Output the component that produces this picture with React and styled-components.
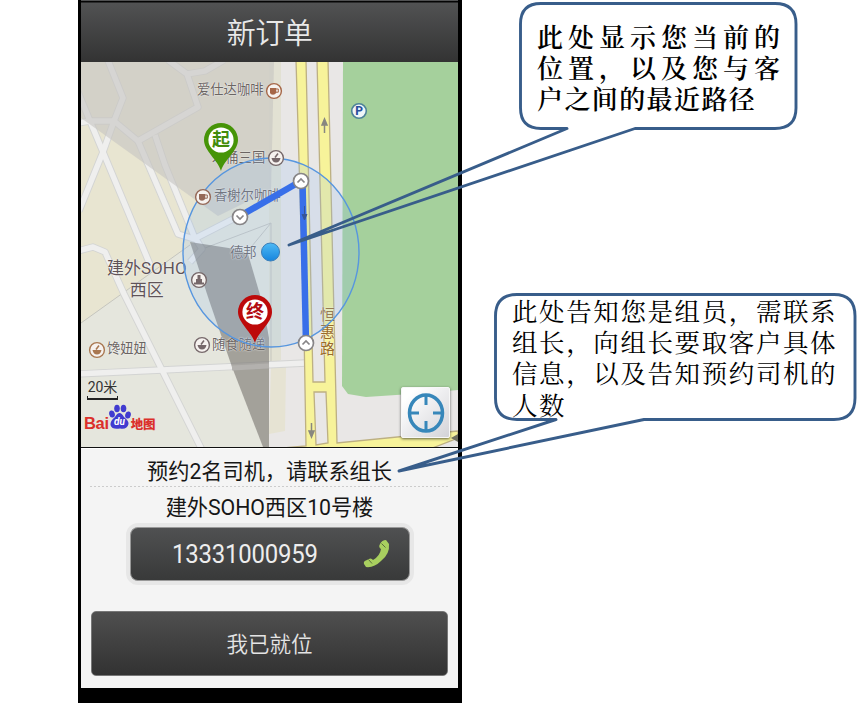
import React from "react";
import styled, { createGlobalStyle } from "styled-components";

const GlobalStyle = createGlobalStyle`
  * { box-sizing: border-box; }
  body {
    margin: 0;
    background: #fff;
    font-family: Roboto, "Noto Sans CJK SC", sans-serif;
    overflow: hidden;
  }
`;

const Page = styled.main`
  display: flex;
  width: 858px;
  height: 712px;
  padding-left: 78px;
`;

const Phone = styled.section`
  display: flex;
  flex-direction: column;
  flex: none;
  width: 384px;
  height: 703px;
  padding: 0 4px 15px 3px;
  background: #000;
`;

const TitleBar = styled.header`
  display: flex;
  align-items: center;
  justify-content: center;
  height: 62px;
  padding-bottom: 1px;
  border-top: 1px solid #505152;
  background: linear-gradient(#050505 0 1px, #515253 2px, #333 100%);
  color: #e9e9e9;
  font-size: 29px;
  font-weight: 350;
  letter-spacing: -0.5px;
`;

const MapArea = styled.div`
  position: relative;
  height: 385px;
  overflow: hidden;
`;

const MapArt = styled.svg`
  display: block;
  width: 377px;
  height: 385px;
`;

const PlaceLabel = styled.span`
  position: absolute;
  left: ${(p) => p.$x - 81}px;
  top: ${(p) => p.$y - 62}px;
  color: ${(p) => p.$color || "#6b6563"};
  font-size: ${(p) => p.$size || 13.3}px;
  font-weight: ${(p) => p.$weight || 400};
  line-height: ${(p) => p.$leading || 16}px;
  text-align: center;
  white-space: pre;
  text-shadow: 0 0 1px #fff, 0 0 2px #ffffffa0;
`;

const DuLabel = styled(PlaceLabel)`
  font-style: italic;
  text-shadow: none;
`;

const MapLayer = styled(MapArt)`
  position: absolute;
  inset: 0;
`;

const ScaleBar = styled.div`
  position: absolute;
  left: 6px;
  top: 316px;
  width: 31px;
  height: 22px;
  background:
    linear-gradient(#222, #222) bottom / 100% 2px no-repeat,
    linear-gradient(#222, #222) left bottom / 1px 4px no-repeat,
    linear-gradient(#222, #222) right bottom / 1px 4px no-repeat;
  color: #333;
  font-size: 14px;
  line-height: 19px;
  text-align: center;
  white-space: nowrap;
`;

const Brand = styled.div`
  position: absolute;
  left: 3px;
  top: 350px;
  display: flex;
  align-items: center;
  height: 22px;
  color: #db302b;
  font-family: "Liberation Sans", "Noto Sans CJK SC", sans-serif;
  font-size: 16.5px;
  font-weight: 700;
  letter-spacing: -0.3px;
`;

const BrandCjk = styled.span`
  margin-left: 22px;
  font-size: 12.5px;
  font-weight: 900;
  letter-spacing: -0.4px;
`;

const LocateButton = styled.button`
  position: absolute;
  left: 320px;
  top: 325px;
  display: grid;
  place-items: center;
  width: 49px;
  height: 51px;
  padding: 0;
  border: 1px solid #f7f7f7;
  border-radius: 2px;
  background: linear-gradient(135deg, #fff 15%, #d3d3d8);
  box-shadow: 0 1px 3px #0009;
`;

const Details = styled.div`
  display: flex;
  flex-direction: column;
  align-items: center;
  flex: 1;
  border-top: 1px solid #111;
  background: #f4f4f4;
  box-shadow: inset 0 1px #fff;
`;

const Notice = styled.p`
  width: 360px;
  height: 39px;
  margin: 0;
  background: repeating-linear-gradient(90deg, #ccc 0 2px, transparent 2px 4px) bottom / 100% 1px no-repeat;
  color: #161616;
  font-size: 21.2px;
  line-height: 47px;
  text-align: center;
  white-space: nowrap;
`;

const Address = styled.p`
  height: 36px;
  margin: 0;
  color: #161616;
  font-size: 21.3px;
  line-height: 42px;
  letter-spacing: -0.1px;
  white-space: nowrap;
`;

const CallButton = styled.button`
  display: flex;
  align-items: center;
  justify-content: space-between;
  width: 288px;
  height: 62px;
  padding: 0 20px 1px 42px;
  border: 4px solid #e7e7e7;
  border-radius: 12px;
  background: linear-gradient(#505152, #383939) padding-box;
  background-color: #e7e7e7;
  box-shadow: inset 0 0 0 1px #999;
  color: #ededed;
  font-family: Roboto, sans-serif;
`;

const PhoneNumber = styled.span`
  width: 146px;
  font-size: 26px;
  line-height: 30px;
  letter-spacing: -0.2px;
  white-space: nowrap;
  transform: scaleX(0.92);
  transform-origin: left;
`;

const ReadyButton = styled.button`
  width: 357px;
  height: 65px;
  margin-top: 26px;
  padding: 0 0 2px;
  border: 1px solid #777;
  border-radius: 5px;
  background: linear-gradient(#4f4f4f, #323232);
  color: #e4e4e4;
  font-family: "Noto Sans CJK SC", sans-serif;
  font-size: 21.5px;
  font-weight: 350;
`;

const Notes = styled.aside`
  display: flex;
  flex-direction: column;
  flex: none;
  width: 396px;
  padding-top: 2px;
`;

const Callout = styled.div`
  position: relative;
  width: ${(p) => p.$width}px;
  height: ${(p) => p.$height}px;
  margin: ${(p) => p.$margin};
  padding: ${(p) => p.$padding};
  color: #000;
  font-family: "Noto Serif CJK SC", "Noto Sans CJK SC", serif;
  font-size: ${(p) => p.$size}px;
  font-weight: ${(p) => p.$weight};
  line-height: 31.2px;
`;

const CalloutLine = styled.div`
  letter-spacing: ${(p) => p.$spacing}px;
  white-space: nowrap;
`;

const CalloutOutline = styled.svg`
  position: absolute;
  left: 0;
  top: 0;
  width: 1px;
  height: 1px;
  overflow: visible;
  pointer-events: none;
  fill: none;
  stroke: #385d8a;
  stroke-width: 2.9;
  stroke-linejoin: round;
`;

const roads = [
  "M107 58L123 98L114 121L103 152L79 211",
  "M78 92L90 121L103 152L151 267",
  "M78 123L90 121L114 121L138 141L198 107L187 74L168 60",
  "M187 74L205 71L224 60",
  "M138 141L178 234L194 239L239 216",
  "M155 135L165 165L194 236L202 249L190 262",
  "M78 251L93 247L105 252L124 294L162 370L202 450",
  "M78 374L162 370L306 363",
];

function Terrain() {
  return (
    <MapArt viewBox="81 62 377 385">
      <rect x="81" y="62" width="377" height="385" fill="#e8e5d1" />
      <path d="M81 323L190 245L239 216L281 195V447H81Z" fill="#e5e6dd" />
      <path d="M269 62H286V447H269Z" fill="#e2e1d3" />
      <path d="M281 62H458V447H269V366L281 360Z" fill="#e9e7e6" />
      <path d="M271 367H286L285 431L269 434Z" fill="#e6e3d3" />
      <path d="M81 323L190 245M205 248L271 223V363M271 223L247 252" fill="none" stroke="#c5c5be" />
      <g fill="none" strokeLinejoin="round" stroke="#d3d4d3" strokeWidth="7.3">
        {roads.map((d) => <path key={d} d={d} />)}
      </g>
      <g fill="none" strokeLinejoin="round" stroke="#efefee" strokeWidth="5.5">
        {roads.map((d) => <path key={d} d={d} />)}
      </g>
      <path d="M81 62H274L271 190L218 216L81 118Z" fill="#c6c5c1" opacity=".62" />
      <path d="M343 62H458V390L411 394L366 397L348 394L342 386Z" fill="#a5d09c" />
      <g fill="#f7f39a" stroke="#bdb083" strokeWidth="1.3">
        <path d="M270 449L306 446L304 330L296 60H306L313 382H325L317 60H328L337 443L458 431V438L430 449Z" />
        <path d="M314 392H326L328 443L316 445Z" fill="#e9e7e6" />
      </g>
      <path d="M190 242L235 249L248 254L263 305L269 338V447H263L232 367L210 303Z" fill="#77736e" opacity=".6" />
      <path d="M232 368L269 366" stroke="#b3b1ae" strokeWidth="5" />
    </MapArt>
  );
}

function Poi({ x, y, kind, color = "#76686a" }) {
  return (
    <g transform={`translate(${x} ${y})`}>
      <circle r="7.4" fill="#f6f2ef" stroke={color} strokeWidth="1.4" />
      {kind === "cup" && (
        <>
          <path d="M-4-3H2.200V2Q1 3.700-1 3.700Q-3.500 3.700-4 2Z" fill={color} />
          <path d="M2-2H4.300V1.200H2" fill="none" stroke={color} />
        </>
      )}
      {kind === "bowl" && (
        <>
          <path d="M-4.500 0H4.500Q3.500 4.500 0 4.500T-4.500 0" fill={color} />
          <path d="M-1-.5L2-4.500" stroke={color} strokeWidth="1.5" />
        </>
      )}
      {kind === "building" && <path d="M-5 4.500V2.500H-3V-1H-1.500V-5H1.500V-1H3V2.500H5V4.500Z" fill={color} />}
    </g>
  );
}

function PinShape({ x, y, color }) {
  return (
    <g transform={`translate(${x} ${y})`}>
      <path d="M0 31C-3 20-17 11-17 0A17 17 0 1 1 17 0C17 11 3 20 0 31Z" fill={color} />
      <circle r="12.6" fill="#fff" />
    </g>
  );
}

function RouteNode({ x, y, up }) {
  return (
    <g transform={`translate(${x} ${y})`} fill="#fff" stroke="#878587" strokeWidth="1.7">
      <circle r="7.5" />
      <path d={up ? "M-3.5 1.5L0-2L3.5 1.5" : "M-3.5-1.5L0 2L3.5-1.5"} fill="none" />
    </g>
  );
}

function Route() {
  return (
    <MapLayer viewBox="81 62 377 385">
      <defs>
        <linearGradient id="location" x2="0" y2="1">
          <stop stopColor="#4ebaf5" />
          <stop offset="1" stopColor="#1785dd" />
        </linearGradient>
      </defs>
      <ellipse cx="271" cy="252.500" rx="88" ry="94.500" fill="#91bdf3" fillOpacity=".2" stroke="#5796df" strokeWidth="1.4" />
      <path d="M240 216L301 181" stroke="#386fe9" strokeWidth="6.5" />
      <path d="M302.500 181L306 343" stroke="#386fe9" strokeWidth="6.5" />
      <path d="M304.500 206V220M302 214L304.500 220L307 214" stroke="#365599" fill="#365599" />
      <path d="M324.500 133V122M322 125L324.500 119L327 125ZM311.500 423V433M309 431L311.500 437L314 431Z" stroke="#888780" fill="#888780" strokeWidth="1.5" />
      <path d="M451 438L458 434V442Z" fill="#707060" />
      <Poi x={274} y={91} kind="cup" color="#a66748" />
      <Poi x={276} y={158} kind="bowl" />
      <Poi x={203} y={197} kind="cup" color="#956857" />
      <Poi x={199} y={280} kind="building" />
      <Poi x={97} y={350} kind="bowl" color="#a97750" />
      <Poi x={202} y={345} kind="bowl" />
      <circle cx="359" cy="111" r="7.3" fill="#f0f5f8" stroke="#4e8398" strokeWidth="1.6" />
      <RouteNode x={240} y={217} />
      <RouteNode x={301} y={181} up />
      <RouteNode x={306} y={343} up />
      <circle cx="270.500" cy="252" r="9" fill="url(#location)" stroke="#397eb9" />
      <PinShape x={221} y={140} color="#469407" />
      <PinShape x={255} y={312} color="#bd0909" />
      <g fill="#413bd0">
        <ellipse cx="112" cy="414" rx="2.8" ry="3.6" transform="rotate(-15 112 414)" />
        <ellipse cx="117" cy="408.500" rx="2.8" ry="3.8" />
        <ellipse cx="123.500" cy="408.500" rx="2.8" ry="3.8" />
        <ellipse cx="128" cy="415" rx="2.8" ry="3.6" transform="rotate(15 128 415)" />
        <path d="M115 417Q119.500 409 124 417Q129 421 128.500 424Q127 430 120 428.500Q112 430 110.500 425Q110 421 115 417Z" />
      </g>
    </MapLayer>
  );
}

function Location() {
  return (
    <LocateButton aria-label="定位">
      <svg width="38" height="40" viewBox="-19 -20 38 40" fill="none" stroke="#3787ba">
        <ellipse rx="16.5" ry="18" strokeWidth="3.5" />
        <path d="M0-17V-8M0 17V8M-16 0H-7M16 0H7" strokeWidth="3" />
      </svg>
    </LocateButton>
  );
}

function DistrictMap() {
  return (
    <MapArea>
      <Terrain />
      <PlaceLabel $x={197} $y={82}>爱仕达咖啡</PlaceLabel>
      <PlaceLabel $x={212} $y={150}>木桶三国</PlaceLabel>
      <PlaceLabel $x={214} $y={188}>香榭尔咖啡</PlaceLabel>
      <PlaceLabel $x={230} $y={245}>德邦</PlaceLabel>
      <PlaceLabel $x={107} $y={257} $size={17} $leading={22} $color="#5f5358">{"建外SOHO\n西区"}</PlaceLabel>
      <PlaceLabel $x={107} $y={341}>馋妞妞</PlaceLabel>
      <PlaceLabel $x={212} $y={337}>随食随递</PlaceLabel>
      <PlaceLabel $x={320} $y={307} $size={15} $leading={17} $color="#9a6b28">{"恒\n惠\n路"}</PlaceLabel>
      <Route />
      <PlaceLabel $x={212} $y={129} $size={18} $leading={22} $weight={700} $color="#438c0c">起</PlaceLabel>
      <PlaceLabel $x={246} $y={301} $size={18} $leading={22} $weight={700} $color="#b30c12">终</PlaceLabel>
      <PlaceLabel $x={355.3} $y={103} $size={12} $weight={800} $color="#29509b">P</PlaceLabel>
      <ScaleBar>20米</ScaleBar>
      <Brand>Bai<BrandCjk>地图</BrandCjk></Brand>
      <DuLabel $x={114} $y={415} $size={10} $leading={14} $weight={700} $color="#fff">du</DuLabel>
      <Location />
    </MapArea>
  );
}

function Handset() {
  return (
    <svg width="27" height="29" viewBox="0 0 27 29" fill="#a8cf5f">
      <path d="M17 5Q19 1 23 1L26 5Q27 15 18 22Q11 29 3 28L1 25Q0 22 4 21Q8 18 10 21Q17 17 18 10Q15 8 17 5Z" />
      <path d="M18.500 4.500L22.500 8.500M5.500 20.500L9 24.500" stroke="#5b703c" />
    </svg>
  );
}

export default function App() {
  return (
    <>
      <GlobalStyle />
      <Page>
        <Phone>
          <TitleBar>新订单</TitleBar>
          <DistrictMap />
          <Details>
            <Notice>预约2名司机，请联系组长</Notice>
            <Address>建外SOHO西区10号楼</Address>
            <CallButton>
              <PhoneNumber>13331000959</PhoneNumber>
              <Handset />
            </CallButton>
            <ReadyButton>我已就位</ReadyButton>
          </Details>
        </Phone>
        <Notes>
          <Callout $width={278} $height={127} $margin="0 0 0 57px" $padding="18px 0 0 18px" $size={26} $weight={600}>
            <CalloutOutline>
              <path transform="translate(-519 -2)" d="M541 3.500H775Q796 3.500 796 24V108Q796 128.500 775 128.500H635L289 245L567 128.500H541Q520.500 128.500 520.500 108V24Q520.500 3.500 541 3.500Z" />
            </CalloutOutline>
            <CalloutLine $spacing={5}>此处显示您当前的</CalloutLine>
            <CalloutLine $spacing={5}>位置，以及您与客</CalloutLine>
            <CalloutLine $spacing={1.4}>户之间的最近路径</CalloutLine>
          </Callout>
          <Callout $width={363} $height={129} $margin="164px 0 0 32px" $padding="2px 0 0 18px" $size={25.5} $weight={400}>
            <CalloutOutline>
              <path transform="translate(-494 -293)" d="M517 294.500H834Q855 294.500 855 316V398Q855 419.500 834 419.500H644L399 471L556 419.500H517Q495.500 419.500 495.500 398V316Q495.500 294.500 517 294.500Z" />
            </CalloutOutline>
            <CalloutLine $spacing={1.6}>此处告知您是组员，需联系</CalloutLine>
            <CalloutLine $spacing={1.6}>组长，向组长要取客户具体</CalloutLine>
            <CalloutLine $spacing={1.6}>信息，以及告知预约司机的</CalloutLine>
            <CalloutLine $spacing={1.6}>人数</CalloutLine>
          </Callout>
        </Notes>
      </Page>
    </>
  );
}
